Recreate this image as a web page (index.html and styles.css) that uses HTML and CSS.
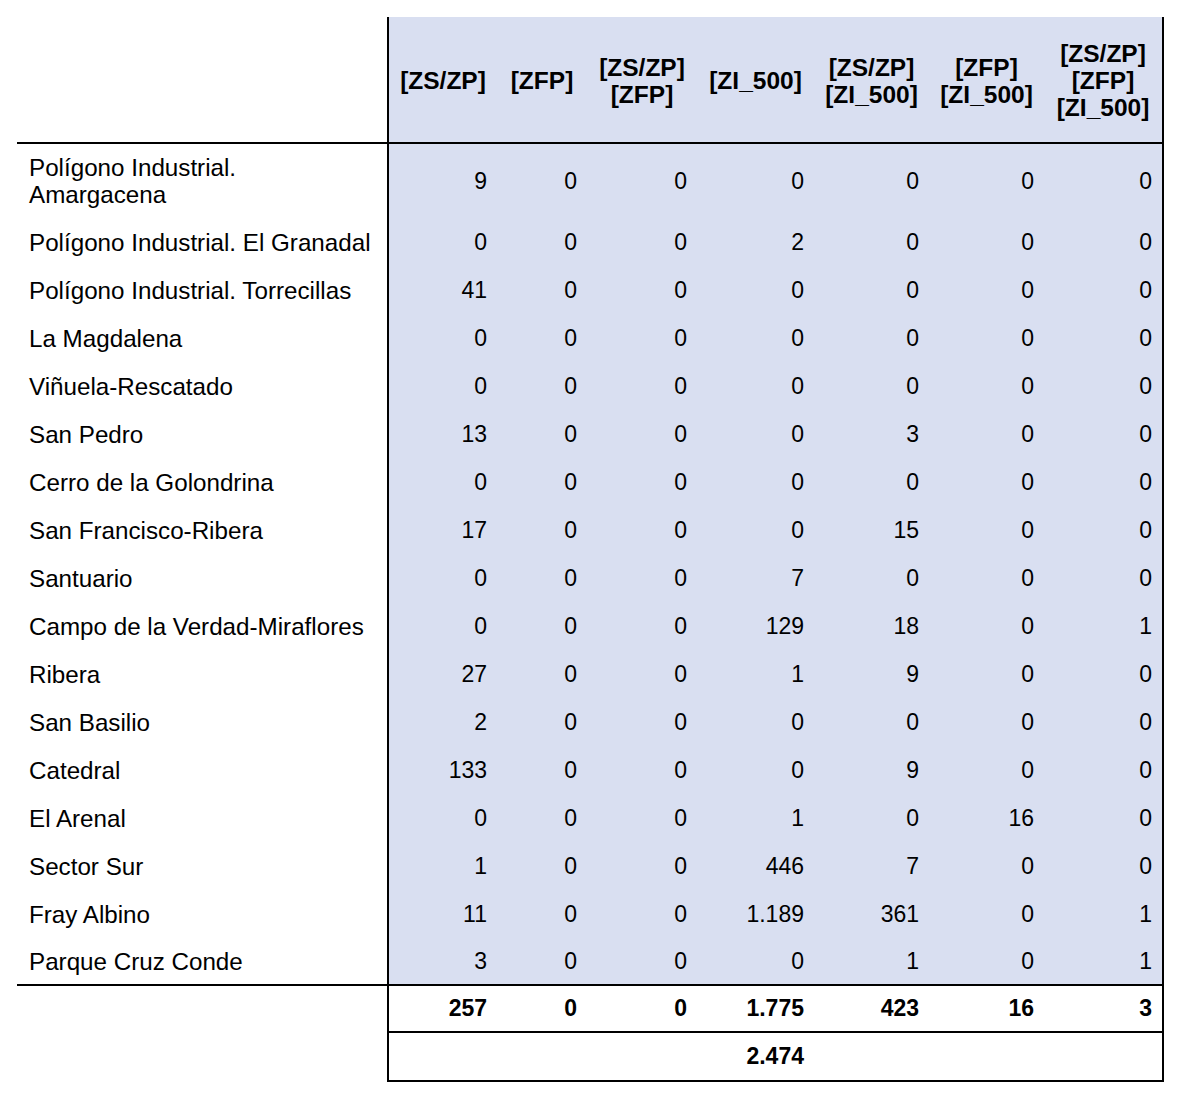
FILE: index.html
```html
<!DOCTYPE html>
<html lang="es">
<head>
<meta charset="utf-8">
<title>Tabla</title>
<link rel="stylesheet" href="styles.css">
</head>
<body>
<div class="tbl">
  <div class="c lbl hd"></div>
  <div class="c hd">[ZS/ZP]</div>
  <div class="c hd">[ZFP]</div>
  <div class="c hd">[ZS/ZP]<br>[ZFP]</div>
  <div class="c hd">[ZI_500]</div>
  <div class="c hd">[ZS/ZP]<br>[ZI_500]</div>
  <div class="c hd">[ZFP]<br>[ZI_500]</div>
  <div class="c hd last">[ZS/ZP]<br>[ZFP]<br>[ZI_500]</div>

  <div class="c lbl first">Polígono Industrial.<br>Amargacena</div>
  <div class="c n first">9</div><div class="c n first">0</div><div class="c n first">0</div><div class="c n first">0</div><div class="c n first">0</div><div class="c n first">0</div><div class="c n first last">0</div>

  <div class="c lbl">Polígono Industrial. El Granadal</div>
  <div class="c n">0</div><div class="c n">0</div><div class="c n">0</div><div class="c n">2</div><div class="c n">0</div><div class="c n">0</div><div class="c n last">0</div>

  <div class="c lbl">Polígono Industrial. Torrecillas</div>
  <div class="c n">41</div><div class="c n">0</div><div class="c n">0</div><div class="c n">0</div><div class="c n">0</div><div class="c n">0</div><div class="c n last">0</div>

  <div class="c lbl">La Magdalena</div>
  <div class="c n">0</div><div class="c n">0</div><div class="c n">0</div><div class="c n">0</div><div class="c n">0</div><div class="c n">0</div><div class="c n last">0</div>

  <div class="c lbl">Viñuela-Rescatado</div>
  <div class="c n">0</div><div class="c n">0</div><div class="c n">0</div><div class="c n">0</div><div class="c n">0</div><div class="c n">0</div><div class="c n last">0</div>

  <div class="c lbl">San Pedro</div>
  <div class="c n">13</div><div class="c n">0</div><div class="c n">0</div><div class="c n">0</div><div class="c n">3</div><div class="c n">0</div><div class="c n last">0</div>

  <div class="c lbl">Cerro de la Golondrina</div>
  <div class="c n">0</div><div class="c n">0</div><div class="c n">0</div><div class="c n">0</div><div class="c n">0</div><div class="c n">0</div><div class="c n last">0</div>

  <div class="c lbl">San Francisco-Ribera</div>
  <div class="c n">17</div><div class="c n">0</div><div class="c n">0</div><div class="c n">0</div><div class="c n">15</div><div class="c n">0</div><div class="c n last">0</div>

  <div class="c lbl">Santuario</div>
  <div class="c n">0</div><div class="c n">0</div><div class="c n">0</div><div class="c n">7</div><div class="c n">0</div><div class="c n">0</div><div class="c n last">0</div>

  <div class="c lbl">Campo de la Verdad-Miraflores</div>
  <div class="c n">0</div><div class="c n">0</div><div class="c n">0</div><div class="c n">129</div><div class="c n">18</div><div class="c n">0</div><div class="c n last">1</div>

  <div class="c lbl">Ribera</div>
  <div class="c n">27</div><div class="c n">0</div><div class="c n">0</div><div class="c n">1</div><div class="c n">9</div><div class="c n">0</div><div class="c n last">0</div>

  <div class="c lbl">San Basilio</div>
  <div class="c n">2</div><div class="c n">0</div><div class="c n">0</div><div class="c n">0</div><div class="c n">0</div><div class="c n">0</div><div class="c n last">0</div>

  <div class="c lbl">Catedral</div>
  <div class="c n">133</div><div class="c n">0</div><div class="c n">0</div><div class="c n">0</div><div class="c n">9</div><div class="c n">0</div><div class="c n last">0</div>

  <div class="c lbl">El Arenal</div>
  <div class="c n">0</div><div class="c n">0</div><div class="c n">0</div><div class="c n">1</div><div class="c n">0</div><div class="c n">16</div><div class="c n last">0</div>

  <div class="c lbl">Sector Sur</div>
  <div class="c n">1</div><div class="c n">0</div><div class="c n">0</div><div class="c n">446</div><div class="c n">7</div><div class="c n">0</div><div class="c n last">0</div>

  <div class="c lbl">Fray Albino</div>
  <div class="c n">11</div><div class="c n">0</div><div class="c n">0</div><div class="c n">1.189</div><div class="c n">361</div><div class="c n">0</div><div class="c n last">1</div>

  <div class="c lbl end">Parque Cruz Conde</div>
  <div class="c n end">3</div><div class="c n end">0</div><div class="c n end">0</div><div class="c n end">0</div><div class="c n end">1</div><div class="c n end">0</div><div class="c n end last">1</div>

  <div class="c lbl tot"></div>
  <div class="c t">257</div><div class="c t">0</div><div class="c t">0</div><div class="c t">1.775</div><div class="c t">423</div><div class="c t">16</div><div class="c t last">3</div>

  <div class="c lbl tot"></div>
  <div class="c g"></div><div class="c g"></div><div class="c g"></div><div class="c g gt">2.474</div><div class="c g"></div><div class="c g"></div><div class="c g last"></div>
</div>
</body>
</html>
```

FILE: styles.css
```css
html, body {
  margin: 0;
  padding: 0;
  background: #ffffff;
}

body {
  padding: 17px 0 0 17px;
  font-family: "Liberation Sans", Arial, sans-serif;
  color: #000;
}

.tbl {
  display: grid;
  width: 1147px;
  grid-template-columns: 372px 108px 90px 110px 117px 115px 115px 120px;
  grid-template-rows: 127px 74px repeat(16, 48px) 47px 49px;
}

.c {
  box-sizing: border-box;
  display: flex;
  align-items: center;
  font-size: 23px;
  line-height: 27px;
}

.lbl {
  border-right: 2px solid #000;
  padding-left: 12px;
  font-size: 24.2px;
}

.hd {
  background: #d9dff1;
  border-bottom: 2px solid #000;
  justify-content: center;
  text-align: center;
  font-weight: bold;
  font-size: 24.5px;
  line-height: 27px;
  padding-top: 2px;
}

.lbl.hd {
  background: #fff;
}

.n {
  background: #d9dff1;
  justify-content: flex-end;
  padding-right: 10px;
}

.end {
  border-bottom: 2px solid #000;
}

.t {
  justify-content: flex-end;
  padding-right: 10px;
  font-weight: bold;
  border-bottom: 2px solid #000;
}

.g {
  justify-content: flex-end;
  padding-right: 10px;
  font-weight: bold;
  border-bottom: 2px solid #000;
}

.last {
  border-right: 2px solid #000;
}
```
